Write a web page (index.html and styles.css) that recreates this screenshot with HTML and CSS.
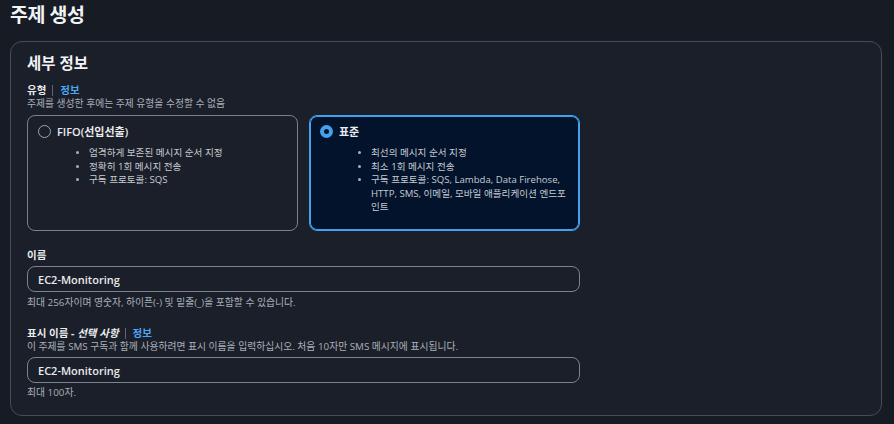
FILE: index.html
```html
<!DOCTYPE html>
<html lang="ko">
<head>
<meta charset="utf-8">
<title>주제 생성</title>
<link rel="stylesheet" href="styles.css">
</head>
<body>
<h1 class="page-title">주제 생성</h1>
<section class="panel">
  <h2 class="panel-title">세부 정보</h2>

  <div class="field">
    <div class="label-row"><span class="label">유형</span><span class="divider"></span><a class="info">정보</a></div>
    <div class="desc">주제를 생성한 후에는 주제 유형을 수정할 수 없음</div>
    <div class="tiles">
      <div class="tile">
        <div class="tile-head"><span class="radio"></span><span class="tile-label">FIFO(선입선출)</span></div>
        <ul class="tile-list">
          <li>엄격하게 보존된 메시지 순서 지정</li>
          <li>정확히 1회 메시지 전송</li>
          <li>구독 프로토콜: SQS</li>
        </ul>
      </div>
      <div class="tile tile-selected">
        <div class="tile-head"><span class="radio radio-checked"></span><span class="tile-label">표준</span></div>
        <ul class="tile-list">
          <li>최선의 메시지 순서 지정</li>
          <li>최소 1회 메시지 전송</li>
          <li>구독 프로토콜: SQS, Lambda, Data Firehose, HTTP, SMS, 이메일, 모바일 애플리케이션 엔드포인트</li>
        </ul>
      </div>
    </div>
  </div>

  <div class="field field-name">
    <div class="label-row"><span class="label">이름</span></div>
    <input class="text-input" type="text" value="EC2-Monitoring" readonly>
    <div class="hint">최대 256자이며 영숫자, 하이픈(-) 및 밑줄(_)을 포함할 수 있습니다.</div>
  </div>

  <div class="field field-display">
    <div class="label-row"><span class="label">표시 이름 - <i>선택 사항</i></span><span class="divider"></span><a class="info">정보</a></div>
    <div class="desc">이 주제를 SMS 구독과 함께 사용하려면 표시 이름을 입력하십시오. 처음 10자만 SMS 메시지에 표시됩니다.</div>
    <input class="text-input" type="text" value="EC2-Monitoring" readonly>
    <div class="hint">최대 100자.</div>
  </div>
</section>
</body>
</html>
```

FILE: styles.css
```css
* { box-sizing: border-box; }

html, body {
  margin: 0;
  padding: 0;
  background: #161b24;
  color: #d1d5db;
  font-family: "Open Sans", "Noto Sans CJK KR", sans-serif;
  font-feature-settings: "palt";
}

.page-title {
  margin: 0;
  padding: 1px 10px 0;
  font-size: 19.5px;
  line-height: 28px;
  font-weight: 700;
  color: #f2f3f5;
  letter-spacing: -0.5px;
}

.panel {
  margin: 12px 12px 0 10px;
  background: #1b1f29;
  border: 1px solid #474c58;
  border-radius: 12px;
  padding: 11px 16px 16px;
}

.panel-title {
  margin: 0;
  font-size: 15.5px;
  line-height: 20px;
  font-weight: 700;
  color: #f2f3f5;
}

.field {
  max-width: 553px;
}

.field:first-of-type { margin-top: 11px; }

.label-row {
  display: flex;
  align-items: center;
  height: 13px;
}

.label {
  font-size: 10.5px;
  line-height: 13px;
  font-weight: 700;
  color: #e9ebed;
}

.label i { font-style: italic; }

.divider {
  width: 1px;
  height: 11px;
  background: #5f6673;
  margin: 0 7px 0 6px;
}

.info {
  font-size: 10.5px;
  font-weight: 700;
  line-height: 13px;
  color: #4aa8f6;
}

.desc, .hint {
  font-size: 9.8px;
  line-height: 13px;
  color: #a9b0ba;
}

.tiles {
  display: grid;
  grid-template-columns: 1fr 1fr;
  gap: 11px;
  margin-top: 5px;
}

.tile {
  height: 116px;
  border: 1px solid #7a808b;
  border-radius: 8px;
  padding: 7px 8px 0 10px;
}

.tile-selected {
  background: #02132b;
  border-color: #43a2ee;
  box-shadow: inset 0 0 0 1px #43a2ee;
}

.tile-head {
  display: flex;
  align-items: center;
  gap: 6px;
  height: 16px;
}

.radio {
  width: 13px;
  height: 13px;
  border-radius: 50%;
  border: 1.5px solid #9ba3ae;
  flex: none;
}

.radio-checked {
  border: 4px solid #43a2ee;
  background: #0b1320;
}

.tile-label {
  font-size: 11px;
  font-weight: 600;
  color: #e9ebed;
}

.tile-list {
  margin: 7px 0 0;
  padding-left: 51px;
  font-size: 9.6px;
  line-height: 13.5px;
  color: #c6cbd2;
}

.tile-list li::marker { color: #a9b0ba; font-size: 8px; }

.field-name { margin-top: 18px; }
.field-display { margin-top: 18px; }

.text-input {
  display: block;
  width: 100%;
  height: 26px;
  margin-top: 4px;
  padding: 0 10px;
  background: #1b1f29;
  border: 1px solid #7d838c;
  border-radius: 8px;
  color: #e9ebed;
  font-family: inherit;
  font-size: 11px;
  font-weight: 600;
  outline: none;
}

.field-name .hint { margin-top: 4px; }
.field-display .hint { margin-top: 3px; }
```
